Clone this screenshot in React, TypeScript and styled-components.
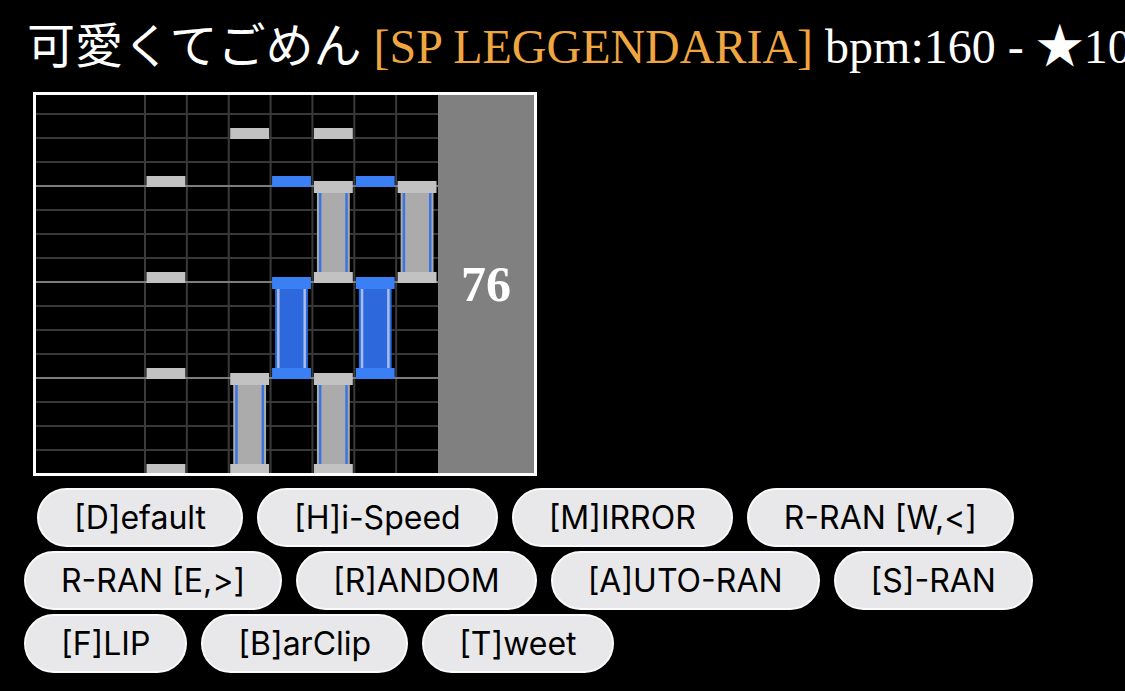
import styled, { createGlobalStyle } from "styled-components";

const GlobalStyle = createGlobalStyle`
  html, body {
    margin: 0;
    padding: 0;
    background: #000;
  }
  body {
    font-family: "Liberation Serif", "Noto Sans CJK JP", serif;
    color: #fff;
  }
`;

const Page = styled.div`
  width: 100vw;
  height: 100vh;
  overflow: hidden;
  padding: 21px 0 0 24px;
  box-sizing: border-box;
`;

const Title = styled.div`
  margin-left: 3px;
  height: 52px;
  font-size: 48px;
  line-height: 52px;
  white-space: nowrap;
  color: #fff;
`;

const Difficulty = styled.span`
  color: #f0a640;
`;

const Chart = styled.div`
  display: flex;
  width: fit-content;
  margin: 19px 0 0 9px;
  border: 3px solid #fff;
`;

const Lanes = styled.svg`
  display: block;
  background: #000;
`;

const Panel = styled.div`
  width: 96px;
  background: #808080;
  display: flex;
  align-items: center;
  justify-content: center;
  font-family: "Liberation Serif", serif;
  font-weight: 700;
  font-size: 50px;
  color: #fff;
`;

const Buttons = styled.div`
  display: flex;
  flex-wrap: wrap;
  column-gap: 14px;
  row-gap: 4px;
  margin-top: 12px;
`;

const Button = styled.button`
  height: 59px;
  padding: 0 35px;
  border: 2px solid #fafafa;
  border-radius: 30px;
  background: #e8e8ea;
  color: #000;
  font-family: Inter, "Noto Sans", sans-serif;
  font-size: 32px;
  &:first-child {
    margin-left: 13px;
  }
`;

const W = 402;
const H = 378;
const SCRATCH = 109;
const LANE = (W - SCRATCH) / 7;
const line = (k: number) => 379 - 24 * k;

const WHITE = "#c2c2c2";
const BLUE = "#3a80f4";

type Note = { lane: number; k: number };
type Long = { lane: number; from: number; to: number };

const singles: Note[] = [
  { lane: 1, k: 0 },
  { lane: 1, k: 4 },
  { lane: 1, k: 8 },
  { lane: 1, k: 12 },
  { lane: 3, k: 14 },
  { lane: 4, k: 12 },
  { lane: 5, k: 14 },
  { lane: 6, k: 12 },
];

const longs: Long[] = [
  { lane: 3, from: 0, to: 4 },
  { lane: 4, from: 4, to: 8 },
  { lane: 5, from: 8, to: 12 },
  { lane: 5, from: 0, to: 4 },
  { lane: 6, from: 4, to: 8 },
  { lane: 7, from: 8, to: 12 },
];

const isBlue = (lane: number) => lane % 2 === 0;
const laneX = (lane: number) => SCRATCH + LANE * (lane - 1) + 1.5;
const noteW = LANE - 3;

function LongNote({ lane, from, to }: Long) {
  const x = laneX(lane);
  const top = line(to) + 7;
  const bottom = line(from) - 10;
  const blue = isBlue(lane);
  const body = blue ? "#2d68dc" : "#ababab";
  const stripe = blue ? "#a8bde8" : "#3b74e0";
  const head = blue ? BLUE : WHITE;
  return (
    <g>
      <rect x={x + 3} y={top} width={noteW - 6} height={bottom - top} fill={body} />
      <rect x={x + 5} y={top} width={2.5} height={bottom - top} fill={stripe} />
      <rect x={x + noteW - 7.5} y={top} width={2.5} height={bottom - top} fill={stripe} />
      <rect x={x} y={line(to) - 5} width={noteW} height={12} fill={head} />
      <rect x={x} y={line(from) - 10} width={noteW} height={11} fill={head} />
    </g>
  );
}

function Grid() {
  const rows = Array.from({ length: 16 }, (_, k) => k);
  const cols = Array.from({ length: 7 }, (_, i) => SCRATCH + LANE * i);
  return (
    <g>
      {rows
        .filter((k) => k % 4 !== 0)
        .map((k) => (
          <line key={k} x1={0} x2={W} y1={line(k)} y2={line(k)} stroke="#383838" strokeWidth={2} />
        ))}
      {cols.map((x) => (
        <line key={x} x1={x} x2={x} y1={0} y2={H} stroke="#3a3a3a" strokeWidth={2} />
      ))}
      {rows
        .filter((k) => k % 4 === 0)
        .map((k) => (
          <line key={k} x1={0} x2={W} y1={line(k)} y2={line(k)} stroke="#7c7c7c" strokeWidth={2} />
        ))}
    </g>
  );
}

const buttons = [
  "[D]efault",
  "[H]i-Speed",
  "[M]IRROR",
  "R-RAN [W,<]",
  "R-RAN [E,>]",
  "[R]ANDOM",
  "[A]UTO-RAN",
  "[S]-RAN",
  "[F]LIP",
  "[B]arClip",
  "[T]weet",
];

export default function App() {
  return (
    <Page>
      <GlobalStyle />
      <Title>
        可愛くてごめん <Difficulty>[SP LEGGENDARIA]</Difficulty> bpm:160 - ★10
      </Title>
      <Chart>
        <Lanes width={W} height={H} viewBox={`0 0 ${W} ${H}`}>
          <Grid />
          {singles.map((n, i) => (
            <rect
              key={i}
              x={laneX(n.lane)}
              y={line(n.k) - 10}
              width={noteW}
              height={11}
              fill={isBlue(n.lane) ? BLUE : WHITE}
            />
          ))}
          {longs.map((n, i) => (
            <LongNote key={i} {...n} />
          ))}
        </Lanes>
        <Panel>76</Panel>
      </Chart>
      <Buttons>
        {buttons.map((b) => (
          <Button key={b}>{b}</Button>
        ))}
      </Buttons>
    </Page>
  );
}
